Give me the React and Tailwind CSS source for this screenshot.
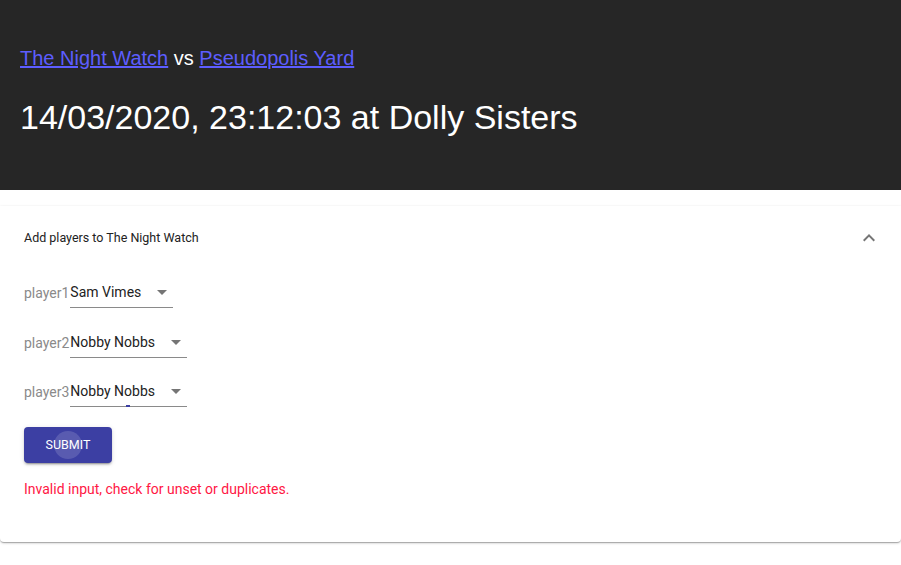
import React from 'react';

const players = [
    { label: 'player1', value: 'Sam Vimes', width: 'w-[103px]' },
    { label: 'player2', value: 'Nobby Nobbs', width: 'w-[117px]' },
    { label: 'player3', value: 'Nobby Nobbs', width: 'w-[117px]', focused: true },
];

function Caret() {
    return (
        <svg width="10" height="5" viewBox="0 0 10 5" className="absolute right-[6px] top-[8px]">
            <path d="M0 0 L5 5 L10 0 Z" fill="#757575" />
        </svg>
    );
}

export default function App() {
    return (
        <div className="min-h-[565px] bg-white" style={{ fontFamily: 'Roboto, "Liberation Sans", sans-serif' }}>
            <header className="h-[190px] bg-[#262626] px-5 pt-[44px] text-white" style={{ fontFamily: '"Liberation Sans", Arial, sans-serif' }}>
                <div className="text-[20px] leading-[28px]">
                    <a href="#" className="text-[#5d5dff] underline">The Night Watch</a>
                    {' vs '}
                    <a href="#" className="text-[#5d5dff] underline">Pseudopolis Yard</a>
                </div>
                <h1 className="mt-[26px] text-[34px] leading-[38px]">14/03/2020, 23:12:03 at Dolly Sisters</h1>
            </header>

            <section className="mt-4 h-[336px] rounded-b bg-white shadow-[0_1px_3px_0_rgba(0,0,0,0.2),0_1px_1px_0_rgba(0,0,0,0.14),0_2px_1px_-1px_rgba(0,0,0,0.12)]">
                <div className="flex h-16 items-center justify-between px-6">
                    <span className="text-[12.5px] text-[#222]">Add players to The Night Watch</span>
                    <svg width="24" height="24" viewBox="0 0 24 24" className="-mr-[4px]">
                        <path d="M7.41 15.41 12 10.83l4.59 4.58L18 14l-6-6-6 6z" fill="#757575" />
                    </svg>
                </div>

                <div className="flex flex-col px-6 pt-[12px]">
                    {players.map(p => (
                        <div key={p.label} className="mb-[23.5px] flex items-end text-[14px]">
                            <span className="pb-[4px] pr-[1px] text-[#8a8a8a]">{p.label}</span>
                            <div className={`relative ${p.width} border-b border-[#8a8a8a] pb-[4px] text-[#222]`}>
                                {p.value}
                                <Caret />
                                {p.focused && <span className="absolute bottom-[-1px] left-[56px] h-[2px] w-[4px] bg-[#3c3fa3]" />}
                            </div>
                        </div>
                    ))}

                    <button className="relative mt-[-3.5px] h-9 w-[88px] overflow-hidden rounded bg-[#3c3fa3] text-[12.5px] text-white shadow-[0_3px_1px_-2px_rgba(0,0,0,0.2),0_2px_2px_0_rgba(0,0,0,0.14),0_1px_5px_0_rgba(0,0,0,0.12)]">
                        <span className="absolute left-[30px] top-[4px] h-[28px] w-[28px] rounded-full bg-white/15" />
                        <span className="relative">SUBMIT</span>
                    </button>

                    <p className="mt-[16px] text-[14px] text-[#ff1744]">Invalid input, check for unset or duplicates.</p>
                </div>
            </section>
        </div>
    );
}
